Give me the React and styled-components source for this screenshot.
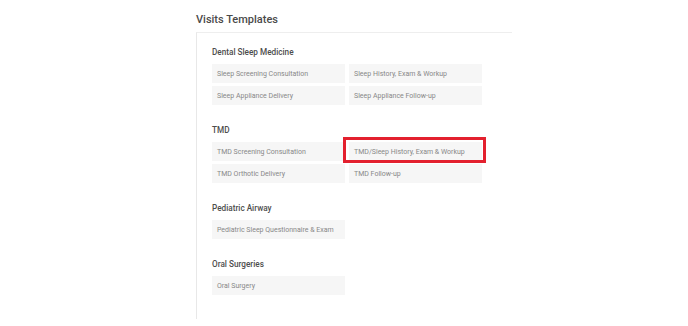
import React from 'react'
import styled, { createGlobalStyle } from 'styled-components'

const GlobalStyle = createGlobalStyle`
  html, body {
    margin: 0;
    padding: 0;
    background: #ffffff;
  }
  body {
    font-family: Roboto, 'Liberation Sans', Arial, sans-serif;
  }
`

const Page = styled.div`
  width: 688px;
  height: 326px;
  box-sizing: border-box;
  padding: 12px 0 0 196px;
  overflow: hidden;
`

const PageTitle = styled.h2`
  margin: 0;
  font-size: 11px;
  line-height: 16px;
  font-weight: 500;
  color: #4a4a4a;
`

const Card = styled.div`
  margin-top: 4px;
  width: 316px;
  height: 287px;
  box-sizing: border-box;
  border-top: 1px solid #eeeeee;
  border-left: 1px solid #e8e8e8;
  padding: 14px 0 0 15px;
`

const Section = styled.section`
  & + & {
    margin-top: 20px;
  }
`

const SectionTitle = styled.h3`
  margin: 0 0 6px;
  font-size: 8.2px;
  line-height: 11px;
  font-weight: 500;
  color: #4d4d4d;
`

const Grid = styled.div`
  display: grid;
  grid-template-columns: 133px 133px;
  column-gap: 4px;
  row-gap: 3px;
`

const TemplateButton = styled.div`
  position: relative;
  height: 19px;
  display: flex;
  align-items: center;
  padding-left: 5px;
  background: #f6f6f6;
  font-size: 7px;
  color: #888888;
  white-space: nowrap;

  &::after {
    content: '';
    display: ${({ highlighted }) => (highlighted ? 'block' : 'none')};
    position: absolute;
    top: -5px;
    right: -4px;
    bottom: -2px;
    left: -6px;
    border: 3px solid #e3202e;
  }
`

const sections = [
  {
    title: 'Dental Sleep Medicine',
    items: [
      'Sleep Screening Consultation',
      'Sleep History, Exam & Workup',
      'Sleep Appliance Delivery',
      'Sleep Appliance Follow-up',
    ],
  },
  {
    title: 'TMD',
    items: [
      'TMD Screening Consultation',
      'TMD/Sleep History, Exam & Workup',
      'TMD Orthotic Delivery',
      'TMD Follow-up',
    ],
    highlight: 'TMD/Sleep History, Exam & Workup',
  },
  {
    title: 'Pediatric Airway',
    items: ['Pediatric Sleep Questionnaire & Exam'],
  },
  {
    title: 'Oral Surgeries',
    items: ['Oral Surgery'],
  },
]

export default function App() {
  return (
    <>
      <GlobalStyle />
      <Page>
        <PageTitle>Visits Templates</PageTitle>
        <Card>
          {sections.map((s) => (
            <Section key={s.title}>
              <SectionTitle>{s.title}</SectionTitle>
              <Grid>
                {s.items.map((item) => (
                  <TemplateButton key={item} highlighted={item === s.highlight}>
                    {item}
                  </TemplateButton>
                ))}
              </Grid>
            </Section>
          ))}
        </Card>
      </Page>
    </>
  )
}
